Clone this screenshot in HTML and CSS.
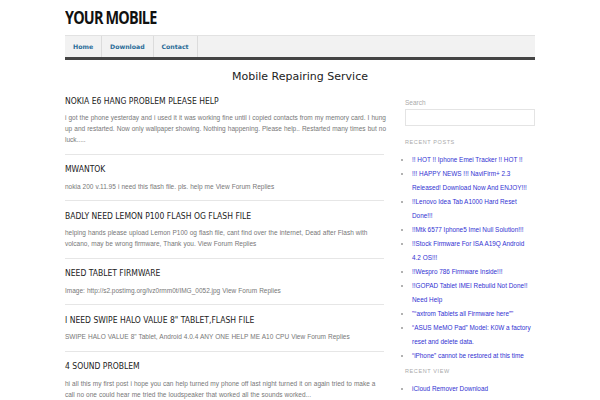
FILE: index.html
```html
<!DOCTYPE html>
<html lang="en">
<head>
  <meta charset="UTF-8">
  <title>Your Mobile</title>
  <link rel="stylesheet" href="styles.css">
</head>
<body>
  <div class="wrap">
    <header class="site-header">
      <div class="logo">YOUR MOBILE</div>
      <nav class="main-nav">
        <a href="#" class="nav-link">Home</a>
        <a href="#" class="nav-link">Download</a>
        <a href="#" class="nav-link">Contact</a>
      </nav>
    </header>

    <h1 class="page-title">Mobile Repairing Service</h1>

    <div class="layout">
      <main class="posts">
        <article class="post">
          <h2 class="post-title">Nokia E6 hang problem please help</h2>
          <p class="post-text">i got the phone yesterday and i used it it was working fine until i copied contacts from my memory card. I hung up and restarted. Now only wallpaper showing. Nothing happening. Please help.. Restarted many times but no luck.....</p>
        </article>
        <article class="post">
          <h2 class="post-title">Mwantok</h2>
          <p class="post-text">nokia 200 v.11.95 i need this flash file. pls. help me View Forum Replies</p>
        </article>
        <article class="post">
          <h2 class="post-title">Badly need Lemon P100 flash og flash file</h2>
          <p class="post-text">helping hands please upload Lemon P100 og flash file, cant find over the internet, Dead after Flash with volcano, may be wrong firmware, Thank you. View Forum Replies</p>
        </article>
        <article class="post">
          <h2 class="post-title">Need tablet firmware</h2>
          <p class="post-text">Image: http://s2.postimg.org/lvz0rmm0t/IMG_0052.jpg View Forum Replies</p>
        </article>
        <article class="post">
          <h2 class="post-title">I need SWIPE HALO VALUE 8" tablet,flash file</h2>
          <p class="post-text">SWIPE HALO VALUE 8" Tablet, Android 4.0.4 ANY ONE HELP ME A10 CPU View Forum Replies</p>
        </article>
        <article class="post">
          <h2 class="post-title">4 sound problem</h2>
          <p class="post-text">hi all this my first post i hope you can help turned my phone off last night turned it on again tried to make a call no one could hear me tried the loudspeaker that worked all the sounds worked...</p>
        </article>
      </main>

      <aside class="sidebar">
        <div class="widget widget-search">
          <label class="search-label">Search</label>
          <input type="text" class="search-input">
        </div>
        <div class="widget widget-recent">
          <h3 class="widget-title">Recent Posts</h3>
          <ul class="link-list">
            <li><a href="#">!! HOT !! Iphone Emei Tracker !! HOT !!</a></li>
            <li><a href="#">!!! HAPPY NEWS !!! NaviFirm+ 2.3 Released! Download Now And ENJOY!!!</a></li>
            <li><a href="#">!!Lenovo Idea Tab A1000 Hard Reset Done!!!</a></li>
            <li><a href="#">!!Mtk 6577 Iphone5 Imei Null Solution!!!</a></li>
            <li><a href="#">!!Stock Firmware For ISA A19Q Android 4.2 OS!!!</a></li>
            <li><a href="#">!!Wespro 786 Firmware Inside!!!</a></li>
            <li><a href="#">!!GOPAD Tablet IMEI Rebuild Not Done!! Need Help</a></li>
            <li><a href="#">"“axtrom Tablets all Firmware here”"</a></li>
            <li><a href="#">“ASUS MeMO Pad” Model: K0W a factory reset and delete data.</a></li>
            <li><a href="#">“iPhone” cannot be restored at this time</a></li>
          </ul>
        </div>
        <div class="widget">
          <h3 class="widget-title">Recent View</h3>
          <ul class="link-list">
            <li><a href="#">iCloud Remover Download</a></li>
          </ul>
        </div>
      </aside>
    </div>
  </div>
</body>
</html>
```

FILE: styles.css
```css
body {
  margin: 0;
  background: #fff;
  font-family: 'Liberation Sans', Arial, sans-serif;
  color: #333;
}

.wrap {
  width: 470px;
  margin: 0 auto;
}

.logo {
  font-family: 'Open Sans', sans-serif;
  font-weight: bold;
  font-size: 18px;
  letter-spacing: -1px;
  color: #111;
  padding-top: 5px;
  height: 30px;
  transform: scaleX(0.8);
  transform-origin: left center;
}

.main-nav {
  display: flex;
  background: #f2f2f2;
  border-top: 1px solid #e2e2e2;
  border-bottom: 3px solid #444;
  height: 21px;
}

.nav-link {
  font-family: 'DejaVu Sans', sans-serif;
  font-weight: bold;
  font-size: 6.2px;
  color: #2a6c98;
  text-decoration: none;
  line-height: 21px;
  padding: 0 8px;
  border-right: 1px solid #dcdcdc;
}

.page-title {
  font-family: 'DejaVu Sans', sans-serif;
  font-weight: normal;
  font-size: 11px;
  line-height: 13px;
  color: #222;
  text-align: center;
  margin: 10px 0 0;
}

.layout {
  display: flex;
  justify-content: space-between;
  margin-top: 3px;
}

.posts {
  width: 319px;
}

.post {
  border-bottom: 1px solid #e6e6e6;
  padding: 6.5px 0 8.5px;
}

.post-title {
  font-family: 'DejaVu Sans Condensed', 'DejaVu Sans', sans-serif;
  font-weight: normal;
  font-size: 8.5px;
  text-transform: uppercase;
  color: #222;
  margin: 0;
  line-height: 16px;
}

.post-text {
  font-size: 6.5px;
  line-height: 11px;
  word-spacing: 0.25px;
  color: #777;
  margin: 3.5px -3px 0 0;
}

.sidebar {
  width: 130px;
  padding-top: 11px;
}

.search-label {
  display: block;
  font-size: 6.5px;
  color: #aaa;
  line-height: 12px;
}

.search-input {
  display: block;
  box-sizing: border-box;
  width: 130px;
  height: 17px;
  border: 1px solid #e4e4e4;
  margin: 0;
}

.widget-search {
  margin-bottom: 11px;
}

.widget-recent {
  margin-bottom: 3px;
}

.widget-title {
  font-weight: normal;
  font-size: 5.5px;
  line-height: 10px;
  letter-spacing: 0.6px;
  text-transform: uppercase;
  color: #aaa;
  margin: 0 0 6px;
}

.link-list {
  margin: 0;
  padding: 0 4px 0 7px;
  font-size: 6.4px;
  line-height: 14px;
  color: #999;
}

.link-list a {
  color: #3232d2;
  text-decoration: none;
}
```
